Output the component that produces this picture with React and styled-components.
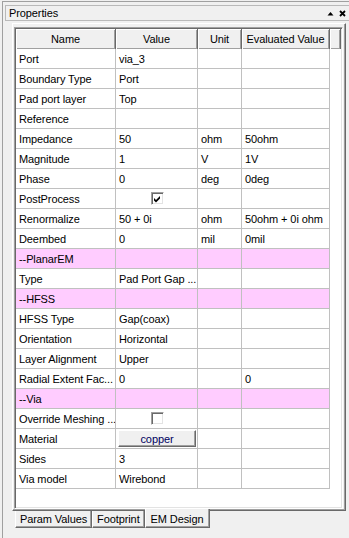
import React from "react";
import styled, { createGlobalStyle } from "styled-components";

const GlobalStyle = createGlobalStyle`
  html, body {
    margin: 0;
    padding: 0;
    background: #f0f0f0;
  }
  body {
    font-family: "Liberation Sans", Arial, sans-serif;
    font-size: 11px;
    letter-spacing: -0.1px;
    color: #000;
  }
`;

const Window = styled.div`
  width: 349px;
  height: 538px;
  overflow: hidden;
  background: #f0f0f0;
`;

const Frame = styled.div`
  margin: 1px 0 0 2px;
  height: 537px;
  box-sizing: border-box;
  border-top: 1px solid #a0a0a0;
  border-left: 1px solid #a0a0a0;
  display: flex;
  flex-direction: column;
`;

const TitleBar = styled.div`
  margin: 3px 0 0 2px;
  height: 16px;
  box-sizing: border-box;
  border: 1px solid #b9b9b9;
  border-right: none;
  display: flex;
  align-items: center;
  padding-left: 3px;
`;

const TitleText = styled.span`
  flex: 1;
`;

const TitleIcons = styled.div`
  display: flex;
  align-items: center;
  gap: 5px;
  padding-right: 3px;
`;

const Panel = styled.div`
  margin: 2px 0 0 9px;
  width: 334px;
  height: 488px;
  box-sizing: border-box;
  border: 1px solid;
  border-color: #ffffff #696969 #696969 #ffffff;
  box-shadow: inset -1px -1px 0 #a0a0a0;
  padding: 3px 2px 1px 1px;
`;

const GridBox = styled.div`
  height: 100%;
  box-sizing: border-box;
  background: #fff;
  border: 1px solid;
  border-color: #a0a0a0 #ffffff #ffffff #a0a0a0;
  box-shadow: inset 1px 1px 0 #696969, inset -1px -1px 0 #e3e3e3;
  padding: 1px;
  overflow: hidden;
`;

const Grid = styled.div`
  display: grid;
  grid-template-columns: 100px 82px 44px 88px 1fr;
  grid-auto-rows: 20px;
`;

const HeaderCell = styled.div`
  height: 21px;
  box-sizing: border-box;
  background: #f0f0f0;
  border-right: 1px solid #696969;
  border-bottom: 1px solid #696969;
  box-shadow: inset 1px 1px 0 #ffffff, inset -1px -1px 0 #a0a0a0;
  display: flex;
  align-items: center;
  justify-content: center;
  white-space: nowrap;
  overflow: hidden;
`;

const Cell = styled.div`
  box-sizing: border-box;
  border-right: 1px solid #c0c0c0;
  border-bottom: 1px solid #c0c0c0;
  background: ${(p) => (p.$group ? "#ffccff" : "#ffffff")};
  display: flex;
  align-items: center;
  justify-content: ${(p) => (p.$center ? "center" : "flex-start")};
  padding: 0 1px 0 ${(p) => (p.$fill ? "2px" : "3px")};
  white-space: nowrap;
  overflow: hidden;
`;

const Filler = styled.div`
  background: #fff;
`;

const CheckBox = styled.div`
  width: 13px;
  height: 13px;
  box-sizing: border-box;
  background: #fff;
  border: 1px solid;
  border-color: #a0a0a0 #ffffff #ffffff #a0a0a0;
  box-shadow: inset 1px 1px 0 #696969, inset -1px -1px 0 #e3e3e3;
  display: flex;
  align-items: center;
  justify-content: center;
`;

const CellButton = styled.div`
  flex: 1;
  height: 17px;
  box-sizing: border-box;
  background: #f0f0f0;
  border: 1px solid;
  border-color: #ffffff #696969 #696969 #ffffff;
  box-shadow: inset -1px -1px 0 #a0a0a0;
  display: flex;
  align-items: center;
  justify-content: center;
  color: #000060;
`;

const TabStrip = styled.div`
  display: flex;
  margin-left: 12px;
  align-items: flex-start;
`;

const Tab = styled.div`
  height: ${(p) => (p.$active ? "19px" : "17px")};
  margin-top: ${(p) => (p.$active ? "-2px" : "0")};
  box-sizing: border-box;
  padding: ${(p) => (p.$active ? "2px 5px 0 5px" : "0 4px")};
  background: #f0f0f0;
  border-left: 1px solid #ffffff;
  border-right: 1px solid #696969;
  border-bottom: 1px solid #696969;
  box-shadow: inset -1px -1px 0 #a0a0a0;
  display: flex;
  align-items: center;
  white-space: nowrap;
  position: relative;
`;

const rows = [
  { name: "Port", value: "via_3" },
  { name: "Boundary Type", value: "Port" },
  { name: "Pad port layer", value: "Top" },
  { name: "Reference", value: "" },
  { name: "Impedance", value: "50", unit: "ohm", evaluated: "50ohm" },
  { name: "Magnitude", value: "1", unit: "V", evaluated: "1V" },
  { name: "Phase", value: "0", unit: "deg", evaluated: "0deg" },
  { name: "PostProcess", check: true },
  { name: "Renormalize", value: "50 + 0i", unit: "ohm", evaluated: "50ohm + 0i ohm" },
  { name: "Deembed", value: "0", unit: "mil", evaluated: "0mil" },
  { group: "--PlanarEM" },
  { name: "Type", value: "Pad Port Gap ..." },
  { group: "--HFSS" },
  { name: "HFSS Type", value: "Gap(coax)" },
  { name: "Orientation", value: "Horizontal" },
  { name: "Layer Alignment", value: "Upper" },
  { name: "Radial Extent Fac...", value: "0", evaluated: "0" },
  { group: "--Via" },
  { name: "Override Meshing ...", check: false },
  { name: "Material", button: "copper" },
  { name: "Sides", value: "3" },
  { name: "Via model", value: "Wirebond" },
];

function CheckMark() {
  return (
    <svg width="9" height="9" viewBox="0 0 9 9">
      <path d="M1 4 L3 6 L7 2 L7 4.5 L3 8.5 L1 6.5 Z" fill="#000" />
    </svg>
  );
}

function ValueCell({ row }) {
  if (row.check !== undefined) {
    return (
      <Cell $center>
        <CheckBox>{row.check && <CheckMark />}</CheckBox>
      </Cell>
    );
  }
  if (row.button) {
    return (
      <Cell $fill>
        <CellButton>{row.button}</CellButton>
      </Cell>
    );
  }
  return <Cell>{row.value}</Cell>;
}

export default function App() {
  return (
    <Window>
      <GlobalStyle />
      <Frame>
        <TitleBar>
          <TitleText>Properties</TitleText>
          <TitleIcons>
            <svg width="7" height="5" viewBox="0 0 7 5">
              <path d="M0.5 4.5 L3.5 1 L6.5 4.5 Z" fill="#000" />
            </svg>
            <svg width="7" height="7" viewBox="0 0 7 7">
              <path d="M1 1 L6 6 M6 1 L1 6" stroke="#000" strokeWidth="1.8" />
            </svg>
          </TitleIcons>
        </TitleBar>
        <Panel>
          <GridBox>
            <Grid>
              <HeaderCell>Name</HeaderCell>
              <HeaderCell>Value</HeaderCell>
              <HeaderCell>Unit</HeaderCell>
              <HeaderCell>Evaluated Value</HeaderCell>
              <HeaderCell />
              {rows.map((row, i) =>
                row.group ? (
                  <React.Fragment key={i}>
                    <Cell $group>{row.group}</Cell>
                    <Cell $group />
                    <Cell $group />
                    <Cell $group />
                    <Filler />
                  </React.Fragment>
                ) : (
                  <React.Fragment key={i}>
                    <Cell>{row.name}</Cell>
                    <ValueCell row={row} />
                    <Cell>{row.unit}</Cell>
                    <Cell>{row.evaluated}</Cell>
                    <Filler />
                  </React.Fragment>
                )
              )}
            </Grid>
          </GridBox>
        </Panel>
        <TabStrip>
          <Tab>Param Values</Tab>
          <Tab>Footprint</Tab>
          <Tab $active>EM Design</Tab>
        </TabStrip>
      </Frame>
    </Window>
  );
}
